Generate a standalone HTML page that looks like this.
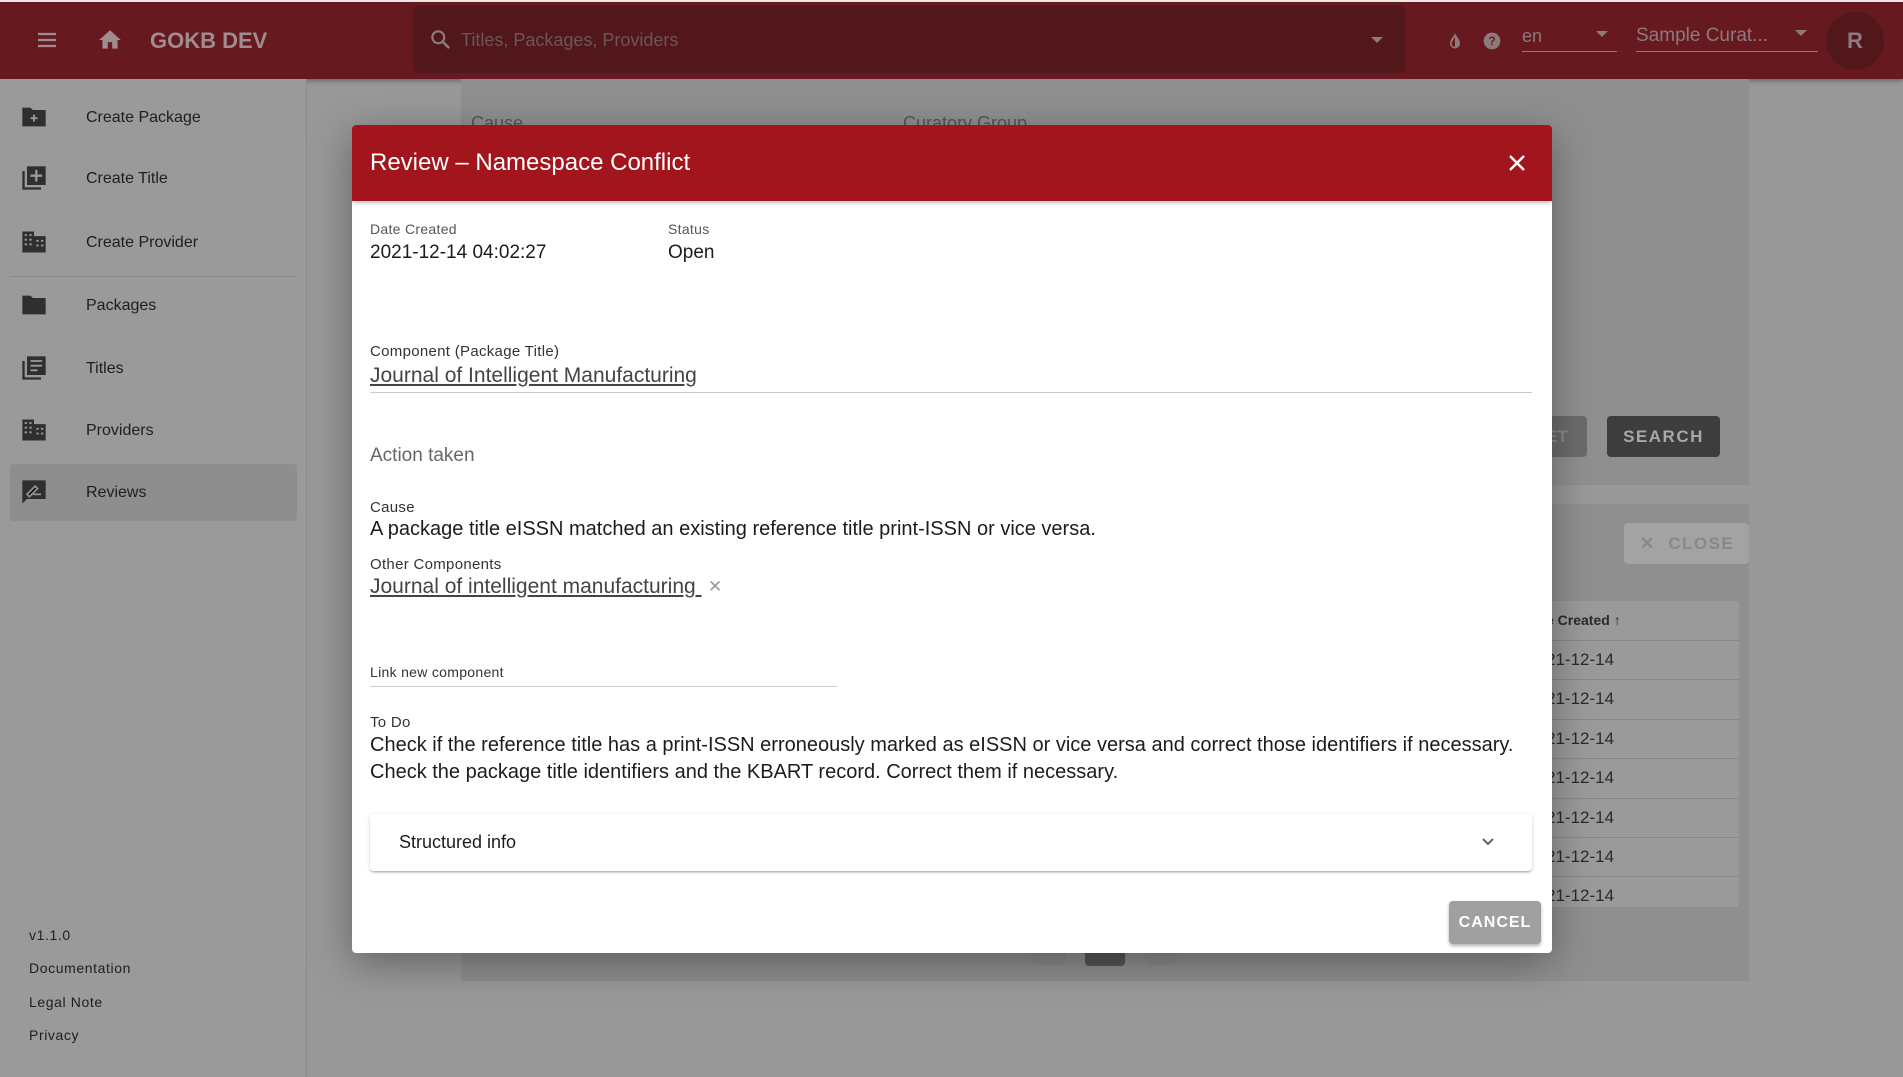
<!DOCTYPE html>
<html><head><meta charset="utf-8"><style>
*{box-sizing:border-box;margin:0;padding:0}
body{width:1903px;height:1077px;overflow:hidden;background:#989898;font-family:"Liberation Sans",sans-serif;position:relative}
.a{position:absolute}
.top{left:0;top:2px;width:1903px;height:77px;background:#661a1f;box-shadow:0 2px 4px rgba(0,0,0,.3)}
.side{left:0;top:79px;width:307px;height:998px;background:#9a9a9a;border-right:1px solid #8a8a8a}
.si{position:absolute;left:86px;font-size:16px;color:#1e1e1e;font-weight:500;transform:translateY(-50%)}
.ic{position:absolute;left:20px;width:28px;height:28px;transform:translateY(-50%)}
.ft{position:absolute;left:29px;font-size:14px;color:#1e1e1e;letter-spacing:.6px}
.dlg{left:352px;top:125px;width:1200px;height:828px;background:#fff;border-radius:4px;overflow:hidden;box-shadow:0 10px 40px rgba(0,0,0,.35)}
.hd{position:absolute;left:0;top:0;width:1200px;height:76px;background:#a3151c;box-shadow:0 2px 4px rgba(0,0,0,.25)}
.lb{position:absolute;font-size:15px;color:#333;letter-spacing:.3px}
.vl{position:absolute;font-size:20px;color:#1c1c1c}
</style></head><body>
<div class="a" style="left:0;top:0;width:1903px;height:2px;background:#eee"></div>
<div class="a top">
 <svg class="a" style="left:35px;top:26px" width="24" height="24" viewBox="0 0 24 24"><path d="M3 6h18M3 12h18M3 18h18" stroke="#a08c8e" stroke-width="2.2"/></svg>
 <svg class="a" style="left:97px;top:25px" width="26" height="26" viewBox="0 0 24 24"><path d="M10 20v-6h4v6h5v-8h3L12 3 2 12h3v8z" fill="#a08c8e"/></svg>
 <div class="a" style="left:150px;top:26px;font-size:22px;font-weight:bold;color:#a08c8e">GOKB DEV</div>
 <div class="a" style="left:413px;top:3px;width:992px;height:68px;background:#51171b;border-radius:6px"></div>
 <svg class="a" style="left:428px;top:25px" width="26" height="26" viewBox="0 0 24 24"><circle cx="9.5" cy="9.5" r="5.5" stroke="#8c7a7c" stroke-width="2" fill="none"/><path d="M13.5 13.5l6 6" stroke="#8c7a7c" stroke-width="2.4"/></svg>
 <div class="a" style="left:461px;top:28px;font-size:18px;color:#6e5558">Titles, Packages, Providers</div>
 <div class="a" style="left:1371px;top:35px;border:6px solid transparent;border-top:6px solid #8c7a7c"></div>
 <svg class="a" style="left:1445px;top:29px" width="20" height="20" viewBox="0 0 24 24"><path d="M12 3C9 8 6 11 6 15a6 6 0 0012 0c0-4-3-7-6-12z" fill="#8c7a7c"/><path d="M12 7c-2 4-4 6-4 8a4 4 0 004 4z" fill="#661a1f"/></svg>
 <svg class="a" style="left:1482px;top:29px" width="20" height="20" viewBox="0 0 24 24"><circle cx="12" cy="12" r="10" fill="#8c7a7c"/><text x="12" y="17" font-size="14" font-weight="bold" text-anchor="middle" fill="#661a1f" font-family="Liberation Sans">?</text></svg>
 <div class="a" style="left:1522px;top:24px;font-size:18px;color:#8c7a7c">en</div>
 <div class="a" style="left:1596px;top:29px;border:6px solid transparent;border-top:6px solid #8c7a7c"></div>
 <div class="a" style="left:1522px;top:49px;width:95px;height:1px;background:#8c7a7c"></div>
 <div class="a" style="left:1636px;top:23px;font-size:19px;color:#8c7a7c">Sample Curat...</div>
 <div class="a" style="left:1795px;top:28px;border:6px solid transparent;border-top:6px solid #8c7a7c"></div>
 <div class="a" style="left:1636px;top:49px;width:182px;height:1px;background:#8c7a7c"></div>
 <div class="a" style="left:1826px;top:10px;width:58px;height:58px;border-radius:50%;background:#51171b;color:#8c7a7c;font-size:22px;font-weight:bold;text-align:center;line-height:58px">R</div>
</div>
<div class="a side">
 <div class="a" style="left:10px;top:385px;width:287px;height:57px;background:#8e8e8e;border-radius:4px"></div>
 <div class="a" style="left:10px;top:197px;width:287px;height:1px;background:#8a8a8a"></div>
 <svg class="ic" style="top:38px" viewBox="0 0 24 24"><path d="M2 4h7l2 2h11v14H2z" fill="#2f2f2f"/><path d="M12 10v6M9 13h6" stroke="#9a9a9a" stroke-width="1.6"/></svg>
 <svg class="ic" style="top:99px" viewBox="0 0 24 24"><path d="M2 6v16h16v-2H4V6z" fill="#2f2f2f"/><rect x="6" y="2" width="16" height="16" fill="#2f2f2f"/><path d="M14 5v10M9 10h10" stroke="#9a9a9a" stroke-width="2"/></svg>
 <svg class="ic" style="top:163px" viewBox="0 0 24 24"><path d="M2 3h10v4h10v14H2z" fill="#2f2f2f"/><path d="M4 6h2M8 6h2M4 10h2M8 10h2M4 14h2M8 14h2M14 11h2M18 11h2M14 15h2M18 15h2" stroke="#9a9a9a" stroke-width="1.6"/></svg>
 <svg class="ic" style="top:226px" viewBox="0 0 24 24"><path d="M2 4h7l2 2h11v14H2z" fill="#2f2f2f"/></svg>
 <svg class="ic" style="top:289px" viewBox="0 0 24 24"><path d="M2 6v16h16v-2H4V6z" fill="#2f2f2f"/><rect x="6" y="2" width="16" height="16" fill="#2f2f2f"/><path d="M9 6h10M9 10h10M9 14h6" stroke="#9a9a9a" stroke-width="1.6"/></svg>
 <svg class="ic" style="top:351px" viewBox="0 0 24 24"><path d="M2 3h10v4h10v14H2z" fill="#2f2f2f"/><path d="M4 6h2M8 6h2M4 10h2M8 10h2M4 14h2M8 14h2M14 11h2M18 11h2M14 15h2M18 15h2" stroke="#9a9a9a" stroke-width="1.6"/></svg>
 <svg class="ic" style="top:413px" viewBox="0 0 24 24"><path d="M2 2h20v16H6l-4 4z" fill="#2f2f2f"/><path d="M6 14l7-7 2 2-7 7zM11 14h7" stroke="#8e8e8e" stroke-width="1.6"/></svg>
 <div class="si" style="top:39px">Create Package</div>
 <div class="si" style="top:100px">Create Title</div>
 <div class="si" style="top:164px">Create Provider</div>
 <div class="si" style="top:227px">Packages</div>
 <div class="si" style="top:290px">Titles</div>
 <div class="si" style="top:352px">Providers</div>
 <div class="si" style="top:414px">Reviews</div>
 <div class="ft" style="top:848px">v1.1.0</div>
 <div class="ft" style="top:881px">Documentation</div>
 <div class="ft" style="top:915px">Legal Note</div>
 <div class="ft" style="top:948px">Privacy</div>
</div>
<div class="a" style="left:461px;top:79px;width:1288px;height:406px;background:#8f8f8f"></div>
<div class="a" style="left:471px;top:113px;font-size:18px;color:#555">Cause</div>
<div class="a" style="left:903px;top:113px;font-size:18px;color:#555">Curatory Group</div>
<div class="a" style="left:1530px;top:416px;width:57px;height:41px;background:#6b6b6b;border-radius:4px;color:#8a8a8a;font-size:17px;font-weight:bold;line-height:41px;padding-left:16px">ET</div>
<div class="a" style="left:1607px;top:416px;width:113px;height:41px;background:#3d3d3d;border-radius:4px;color:#a8a8a8;font-size:17px;font-weight:bold;letter-spacing:1.5px;text-align:center;line-height:41px">SEARCH</div>
<div class="a" style="left:461px;top:504px;width:1288px;height:477px;background:#8f8f8f"></div>
<div class="a" style="left:1624px;top:523px;width:125px;height:41px;background:#a3a3a3;border-radius:4px;color:#888;font-size:17px;font-weight:bold;letter-spacing:1.5px;line-height:41px;padding-left:16px">✕ &nbsp;CLOSE</div>
<div class="a" style="left:1500px;top:601px;width:239px;height:306px;background:#9a9a9a;border-radius:4px"></div>
<div class="a" style="left:1546px;top:612px;font-size:14px;font-weight:bold;color:#2a2a2a">e Created ↑</div>
<div class="a" style="left:1546px;top:640px;width:193px;font-size:17px;color:#2a2a2a;line-height:38.4px">
<div style="border-top:1px solid #888">21-12-14</div><div style="border-top:1px solid #888">21-12-14</div><div style="border-top:1px solid #888">21-12-14</div><div style="border-top:1px solid #888">21-12-14</div><div style="border-top:1px solid #888">21-12-14</div><div style="border-top:1px solid #888">21-12-14</div><div style="border-top:1px solid #888">21-12-14</div></div>
<div class="a" style="left:1031px;top:940px;width:35px;height:25px;background:#8a8a8a;border-radius:4px"></div>
<div class="a" style="left:1085px;top:940px;width:40px;height:26px;background:#555;border-radius:4px"></div>
<div class="a" style="left:1145px;top:940px;width:32px;height:25px;background:#8a8a8a;border-radius:4px"></div>
<div class="a dlg">
 <div class="hd">
  <div class="a" style="left:18px;top:24px;font-size:24px;color:#fff">Review – Namespace Conflict</div>
  <svg class="a" style="left:1155px;top:28px" width="20" height="20" viewBox="0 0 20 20"><path d="M3 3l14 14M17 3L3 17" stroke="#fff" stroke-width="2.4"/></svg>
 </div>
 <div class="lb" style="left:18px;top:96px;font-size:14px;color:#555">Date Created</div>
 <div class="vl" style="left:18px;top:117px;font-size:19px">2021-12-14 04:02:27</div>
 <div class="lb" style="left:316px;top:96px;font-size:14px;color:#555">Status</div>
 <div class="vl" style="left:316px;top:117px;font-size:19px">Open</div>
 <div class="lb" style="left:18px;top:218px">Component (Package Title)</div>
 <div class="vl" style="left:18px;top:239px;color:#444;text-decoration:underline;font-size:21px">Journal of Intelligent Manufacturing</div>
 <div class="a" style="left:18px;top:267px;width:1162px;height:1px;background:#ccc"></div>
 <div class="vl" style="left:18px;top:320px;color:#666;font-size:19px">Action taken</div>
 <div class="lb" style="left:18px;top:374px">Cause</div>
 <div class="vl" style="left:18px;top:393px">A package title eISSN matched an existing reference title print-ISSN or vice versa.</div>
 <div class="lb" style="left:18px;top:431px">Other Components</div>
 <div class="vl" style="left:18px;top:450px;color:#444;text-decoration:underline;font-size:21px">Journal of intelligent manufacturing&nbsp;</div>
 <div class="a" style="left:356px;top:452px;font-size:17px;color:#999">✕</div>
 <div class="lb" style="left:18px;top:539px;font-size:14px">Link new component</div>
 <div class="a" style="left:18px;top:561px;width:467px;height:1px;background:#ccc"></div>
 <div class="lb" style="left:18px;top:589px">To Do</div>
 <div class="vl" style="left:18px;top:607px;line-height:27px;width:1180px;white-space:nowrap">Check if the reference title has a print-ISSN erroneously marked as eISSN or vice versa and correct those identifiers if necessary.<br>Check the package title identifiers and the KBART record. Correct them if necessary.</div>
 <div class="a" style="left:18px;top:689px;width:1162px;height:57px;background:#fff;border-radius:4px;box-shadow:0 2px 2px -1px rgba(0,0,0,.3),0 1px 4px rgba(0,0,0,.15)">
  <div class="a" style="left:29px;top:18px;font-size:18px;color:#1c1c1c">Structured info</div>
  <svg class="a" style="left:1110px;top:20px" width="16" height="16" viewBox="0 0 16 16"><path d="M3 5l5 5 5-5" stroke="#555" stroke-width="1.8" fill="none"/></svg>
 </div>
 <div class="a" style="left:1097px;top:776px;width:92px;height:43px;background:#a0a0a0;border-radius:4px;box-shadow:0 2px 3px rgba(0,0,0,.3);color:#fff;font-size:16px;font-weight:bold;letter-spacing:1px;text-align:center;line-height:43px">CANCEL</div>
</div>
</body></html>
